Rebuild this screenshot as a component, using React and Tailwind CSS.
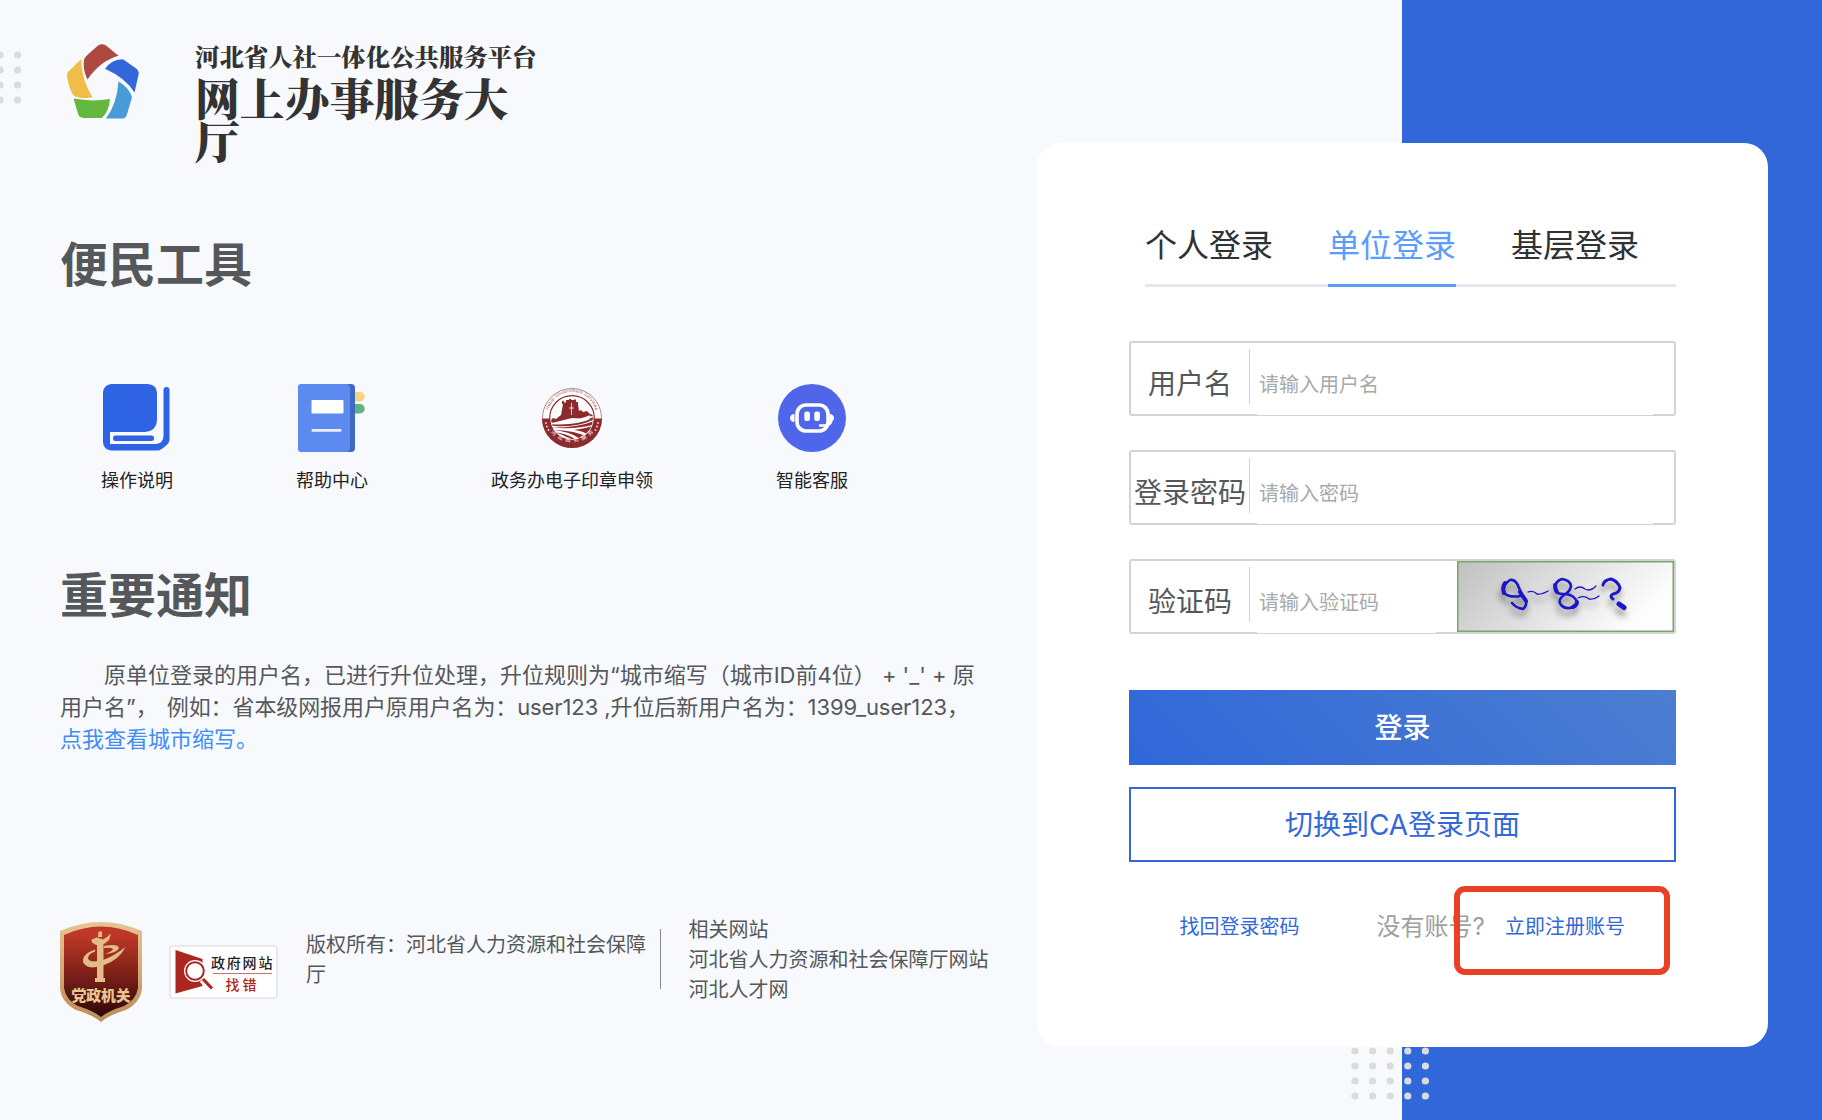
const SANS = "font-['Inter','Noto_Sans_CJK_SC',sans-serif]";
const SERIF = "font-['Noto_Serif_CJK_SC','Noto_Sans_CJK_SC',serif]";

function Dots({ cols, rows, w, className }) {
  const list = [];
  for (let r = 0; r < rows; r++) for (let c = 0; c < cols; c++) list.push([c, r]);
  return (
    <svg className={className} width={w} height={rows * 15} fill="#dadbdc">
      {list.map(([c, r]) => (
        <circle key={`${c}-${r}`} cx={4 + c * 17.6} cy={4 + r * 15} r="3.6" />
      ))}
    </svg>
  );
}

function Logo() {
  return (
    <svg width="74" height="75" viewBox="0 0 74 79" preserveAspectRatio="none" className="shrink-0">
      <path d="M32 1.500Q36 -1 40 1.500L52.500 12.500Q34 18 21.500 37.500Q16.500 26 18 17Q18.500 14.500 20.500 12.500Z" fill="#b04842" />
      <path d="M39 26Q46 16 57 16L70.500 26Q73.500 29 72.500 32.500L68.500 51Q60 36 39 26Z" fill="#3167d9" />
      <path d="M52.500 39.500Q63 46 66 56L61 74Q60 78.500 56 78.500H40Q51 63 52.500 39.500Z" fill="#489ad9" />
      <path d="M7.500 57.500Q26 61 44 58Q43 71 36 78H18Q14 77.500 12.500 75Z" fill="#65b83e" />
      <path d="M15 16Q16 39 26.500 56Q12 58.500 7.500 54Q4 50 1 35Q0 32 2 29.500Z" fill="#f0bd48" />
    </svg>
  );
}

function BookIcon() {
  return (
    <svg width="68" height="68" viewBox="0 0 68 68" fill="#2e64e3">
      <path d="M8 0H45Q54 1 54 9V35Q54 47 42 48H7V60H53Q60.500 59 60.500 52V6Q60.500 3 63.500 3Q66.500 3 66.500 6V56Q66 61 56 66.500H8Q0 65 0 58V8Q1 1 8 0Z" />
      <rect x="10" y="51.500" width="41" height="5.500" rx="2.500" />
    </svg>
  );
}

function NotebookIcon() {
  return (
    <svg width="68" height="68" viewBox="0 0 68 68">
      <path d="M52 8h10a4.700 4.700 0 0 1 0 9.400H52z" fill="#f4d57c" />
      <path d="M52 20h10a4.700 4.700 0 0 1 0 9.400H52z" fill="#5cb37c" />
      <rect width="57" height="68" rx="4" fill="#4069c4" />
      <path d="M4 0H48Q52 0 52 5V63Q52 68 48 68H4Q0 68 0 64V4Q0 0 4 0Z" fill="#5c8aef" />
      <rect x="13.500" y="16" width="32" height="13.500" rx="1" fill="#fff" />
      <rect x="13.500" y="45" width="30" height="2.700" rx="1" fill="#e8effd" />
    </svg>
  );
}

function SealIcon() {
  return (
    <svg width="60" height="60" viewBox="0 0 60 60">
      <defs>
        <path id="sealTop" d="M6 28A24 24 0 0 1 54 28" />
        <path id="sealBottom" d="M2 26A28 28 0 1 0 58 26" />
        <clipPath id="sealInner"><circle cx="30" cy="30" r="21" /></clipPath>
      </defs>
      <circle cx="30" cy="30" r="29.500" fill="#fff" stroke="#a8686a" strokeWidth="0.800" />
      <path d="M0 30.500H60A30 29.500 0 0 1 0 30.500Z" fill="#8c2a2e" />
      <circle cx="30" cy="30" r="22.300" fill="#fff" stroke="#8c2a2e" strokeWidth="1.200" />
      <g clipPath="url(#sealInner)">
        <path d="M8 33L11 30L14 31L19 27L21 16L20 16V13H22V14.500H24V12H27V11H29V12H32V11.500H34V14H36V16L37 23L39 22L41 24L45 23L48 26L54 28V31L45 31L30 30L10 35Z" fill="#8c2a2e" />
        <path d="M29.500 15V27M27 20H32" stroke="#fff" strokeWidth="0.800" />
        <path d="M8 35.500Q34 37 52 28M22 33Q38 33 48 28" fill="none" stroke="#fff" strokeWidth="1.600" />
        <path d="M8 37Q36 39 53 30" fill="none" stroke="#8c2a2e" strokeWidth="1.600" />
        <path d="M8 39.500Q35 40 52 33V36.500Q34 42 8 39.500Z" fill="#8c2a2e" />
        <path d="M10 42Q34 42 47 50L42 54Q30 43 10 42ZM10 44Q26 45 36 53L30 53Q22 46 10 44Z" fill="#8c2a2e" />
        <path d="M32 42Q44 41 53 37V42Q50 46 48 48Q42 43 32 42Z" fill="#8c2a2e" />
      </g>
      <text className={SANS} fontSize="4.600" fill="#8c5a5c" letterSpacing="0.100">
        <textPath href="#sealTop" startOffset="50%" textAnchor="middle">Hebei Government Services</textPath>
      </text>
      <text className={SANS} fontSize="5.400" fill="#f3dfe0" fontWeight="500" letterSpacing="3.200">
        <textPath href="#sealBottom" startOffset="52%" textAnchor="middle">河北政务服务</textPath>
      </text>
      <g fill="#f3dfe0">
        <circle cx="4" cy="35" r="0.900" /><circle cx="5" cy="38.500" r="0.900" /><circle cx="6.500" cy="42" r="0.900" />
        <circle cx="56" cy="35" r="0.900" /><circle cx="55" cy="38.500" r="0.900" /><circle cx="53.500" cy="42" r="0.900" />
      </g>
    </svg>
  );
}

function RobotIcon() {
  return (
    <svg width="68" height="68" viewBox="0 0 68 68" fill="none">
      <circle cx="34" cy="34" r="34" fill="#4f66eb" />
      <rect x="19" y="21" width="31" height="26" rx="9" stroke="#fff" strokeWidth="3.600" />
      <path d="M16 30.500Q12.500 30.500 12.500 34T16 37.500ZM52 30.500Q55.500 30.500 55.500 34T52 37.500Z" fill="#fff" stroke="#fff" />
      <path d="M53.500 37Q52 41.500 46 41.500H41" stroke="#fff" strokeWidth="2.400" />
      <rect x="26.300" y="27.500" width="5.600" height="9.500" rx="2" fill="#fff" />
      <rect x="36.300" y="27.500" width="5.600" height="9.500" rx="2" fill="#fff" />
    </svg>
  );
}

function Shield() {
  return (
    <svg width="82" height="100" viewBox="0 0 82 100" className="shrink-0">
      <defs>
        <linearGradient id="gold" x1="0" y1="0" x2="0" y2="1">
          <stop offset="0" stopColor="#e6c592" /><stop offset="1" stopColor="#b98d5a" />
        </linearGradient>
        <linearGradient id="red" x1="0" y1="0" x2="0" y2="1">
          <stop offset="0.100" stopColor="#be3727" /><stop offset="0.550" stopColor="#7a1f18" /><stop offset="1" stopColor="#2c0806" />
        </linearGradient>
      </defs>
      <path d="M0 9Q41 -9 82 9V66Q81 80 66 88Q49 93 41 100Q33 93 16 88Q1 80 0 66Z" fill="url(#gold)" />
      <path d="M4 13Q41 -4 78 13V66Q76 78 64 84Q48 89 41 95Q34 89 18 84Q6 78 4 66Z" fill="url(#red)" />
      <g fill="#e2bd88">
        <path d="M37 22H43.500V56H37ZM35 56H45V60H35ZM31.500 17.500L37 15.500L43 17.500L47 15L51 11.500L49 18L44 22L36 23L32 20.500ZM38.500 9.500L42 9.500V15H38Z" />
        <path d="M35 27.500Q22 32 23 40Q27 49 44 43Q59 38 65.500 25Q54 34 43 38Q30 41.500 28 36.500Q28 32 35 29.500Z" />
        <path d="M44 24Q58 21 59 26Q57 31 45 32Q53 29 53 27Q51 25 44 26Z" />
      </g>
      <text x="41" y="78.500" textAnchor="middle" className={SANS} fontWeight="900" fontSize="14.800" fill="#e6c592">党政机关</text>
    </svg>
  );
}

function FindErrorBadge() {
  return (
    <div className="mt-[23px] flex h-[54px] w-[109px] shrink-0 rounded-[4px] border-2 border-[#e8e9eb] bg-white">
      <svg width="42" height="50" viewBox="0 0 42 50" className="shrink-0" fill="none">
        <path d="M4.500 3L31.500 12V39L4.500 46.500Z" fill="#ac2620" />
        <path d="M31 33L41 44" stroke="#fff" strokeWidth="6" />
        <circle cx="24" cy="24" r="11" fill="#fff" />
        <circle cx="24" cy="24" r="9.800" fill="#ac2620" />
        <circle cx="24" cy="24" r="7.800" fill="#fff" />
        <path d="M32 32L41 41.500" stroke="#ac2620" strokeWidth="3.200" />
      </svg>
      <div className="-ml-[2px] flex flex-col items-center pt-[7px] leading-none">
        <div className="whitespace-nowrap text-[14px] font-medium leading-[18px] tracking-[1.800px] text-[#222]">政府网站</div>
        <div className="mt-[1px] h-px w-[59px] bg-[#cf6f6c]" />
        <div className="mt-[3px] text-[14px] font-medium leading-[16px] tracking-[3px] text-[#ac2620]">找错</div>
      </div>
    </div>
  );
}

function Captcha() {
  return (
    <svg width="217" height="71" viewBox="1 0 217 71" className="shrink-0" fill="none">
      <defs>
        <linearGradient id="cap" x1="0" y1="0" x2="1" y2="0.330">
          <stop offset="0" stopColor="#c0c0c0" /><stop offset="1" stopColor="#fdfdfd" />
        </linearGradient>
        <filter id="capShadow" x="-20%" y="-20%" width="150%" height="160%">
          <feDropShadow dx="-1" dy="6" stdDeviation="3" floodColor="#333" floodOpacity="0.600" />
        </filter>
      </defs>
      <rect x="1.750" y="0.750" width="215.500" height="69.500" fill="url(#cap)" stroke="#77a868" strokeWidth="1.500" />
      <g stroke="#1a14c8" strokeLinecap="round" strokeLinejoin="round" filter="url(#capShadow)">
        <path d="M64 35Q54 37 48 32Q46 24 54 19Q60 18 63 27Q65 33 70 39Q71 45 67 48Q60 47 56 42" strokeWidth="2.600" />
        <path d="M48 32Q46 26 49 22M64 31L70 40M99 24Q99 28 101 31M117 46Q121 44 121 41" strokeWidth="4" />
        <path d="M110 33Q100 34 99 28Q99 20 106 18Q114 19 115 25Q114 31 108 34Q101 39 105 44Q110 49 117 46Q123 43 120 39Q117 34 110 33" strokeWidth="2.600" />
        <path d="M147 24Q148 19 155 18Q162 20 164 27Q163 32 157 33Q153 35 157 38" strokeWidth="3" />
        <path d="M163 43L168 46.500" strokeWidth="5" />
        <path d="M72 31Q77 29 81 33Q85 34 92 30M119 28Q124 24 129 28Q134 31 140 25M122 37Q128 34 133 38Q138 39 143 35" strokeWidth="1.300" />
      </g>
    </svg>
  );
}

function Field({ label, placeholder, cover, children }) {
  return (
    <div className="relative flex h-[75px] rounded-[3px] border-2 border-[#d3d3d3] bg-white">
      <div className="mt-[6px] flex h-[55px] w-[119px] shrink-0 items-center justify-center whitespace-nowrap border-r border-[#d3d3d3] pt-[14px] text-[28px] leading-none text-[#55585a]">{label}</div>
      <div className="flex flex-1 items-center pl-[9px] pt-[12px] text-[20px] leading-none text-[#a9a9a9]">{placeholder}</div>
      {children}
      <div className={`absolute -bottom-px left-[126px] h-px bg-white ${cover}`} />
    </div>
  );
}

const tools = [
  { label: "操作说明", icon: <BookIcon /> },
  { label: "帮助中心", icon: <NotebookIcon /> },
  { label: "政务办电子印章申领", icon: <SealIcon /> },
  { label: "智能客服", icon: <RobotIcon /> },
];

export default function App() {
  return (
    <div className={`relative flex h-[1120px] w-[1822px] overflow-hidden bg-[#f7f9fd] ${SANS}`}>
      <Dots cols={2} rows={4} w={30} className="absolute left-[-4px] top-[51px]" />
      <div className="absolute right-0 top-0 h-full w-[420px] bg-[#3267d9]" />
      <Dots cols={5} rows={4} w={80} className="absolute left-[1350.500px] top-[1046.500px]" />

      <main className="flex w-[1037px] shrink-0 flex-col pl-[60px]">
        <header className="flex h-[184px] pl-[6px] pt-[44px]">
          <Logo />
          <div className={`-mt-[3px] ml-[55px] w-[350px] font-black text-[#333] ${SERIF}`}>
            <div className="whitespace-nowrap text-[24.400px] leading-[30px]">河北省人社一体化公共服务平台</div>
            <div className="mt-[3.500px] w-[330px] text-[44.800px] leading-[43px]">网上办事服务大厅</div>
          </div>
        </header>

        <h1 className="mt-[51px] text-[48px] font-bold leading-[60px] text-[#55585a]">便民工具</h1>
        <div className="mt-[89px] flex gap-[123px] pl-[41px]">
          {tools.map((t) => (
            <div key={t.label} className="flex flex-col items-center">
              <div className="flex h-[68px] items-center">{t.icon}</div>
              <div className="mt-[17px] whitespace-nowrap text-[18px] leading-[24px] text-[#222]">{t.label}</div>
            </div>
          ))}
        </div>

        <h1 className="mt-[73px] text-[48px] font-bold leading-[60px] text-[#55585a]">重要通知</h1>
        <div className="mt-[33px] whitespace-nowrap text-[22px] leading-[32px] text-[#55585a]">
          <p className="pl-[44px]">原单位登录的用户名，已进行升位处理，升位规则为“城市缩写（城市ID前4位） + '_' + 原</p>
          <p>用户名”，<span className="ml-[3px] tracking-[-0.100px]"> 例如：省本级网报用户原用户名为：user123 ,升位后新用户名为：1399_user123，</span></p>
          <p className="text-[#3f8ef7]">点我查看城市缩写。</p>
        </div>

        <footer className="mt-[167px] flex text-[20px] leading-[30px] text-[#55585a]">
          <Shield />
          <div className="ml-[27px]"><FindErrorBadge /></div>
          <div className="ml-[28px] mt-[8px] w-[344px]">版权所有：河北省人力资源和社会保障厅</div>
          <div className="ml-[10px] mt-[7px] h-[60px] w-px bg-[#888]" />
          <div className="-mt-[7px] ml-[27.500px] whitespace-nowrap">
            <p>相关网站</p>
            <p>河北省人力资源和社会保障厅网站</p>
            <p>河北人才网</p>
          </div>
        </footer>
      </main>

      <section className="relative mt-[143px] h-[904px] w-[731px] rounded-[24px] bg-white pl-[92px] pr-[92px] pt-[78px]">
        <nav className="ml-[16px] flex h-[66px] gap-[55px] border-b-[3px] border-[#e4e7ed] text-[32px] leading-[50px] text-[#303133]">
          <div>个人登录</div>
          <div className="h-[66px] border-b-[3px] border-[#5b9dfd] text-[#5b9dfd]">单位登录</div>
          <div>基层登录</div>
        </nav>
        <div className="mt-[54px] flex flex-col gap-[34px]">
          <Field label="用户名" placeholder="请输入用户名" cover="w-[396px]" />
          <Field label="登录密码" placeholder="请输入密码" cover="w-[396px]" />
          <Field label="验证码" placeholder="请输入验证码" cover="w-[179px]"><Captcha /></Field>
        </div>
        <button className="mt-[56px] block h-[75px] w-full bg-linear-45 from-[#3067d9] to-[#4c7dd0] text-[28px] font-medium text-white">登录</button>
        <button className="mt-[22px] block h-[75px] w-full border-2 border-[#3268d8] text-[28px] text-[#3268d8]">切换到CA登录页面</button>
        <div className="mt-[50px] flex items-center whitespace-nowrap pl-[50.500px] text-[20px] leading-[30px] text-[#3268d8]">
          <a>找回登录密码</a>
          <span className="ml-[77px] w-[108px] text-[24px] text-[#a0a0a0]">没有账号?</span>
          <a className="ml-[20.500px]">立即注册账号</a>
        </div>
        <div className="absolute left-[417px] top-[743px] h-[89px] w-[216px] rounded-[11px] border-[6px] border-[#ea4025]" />
      </section>
    </div>
  );
}
